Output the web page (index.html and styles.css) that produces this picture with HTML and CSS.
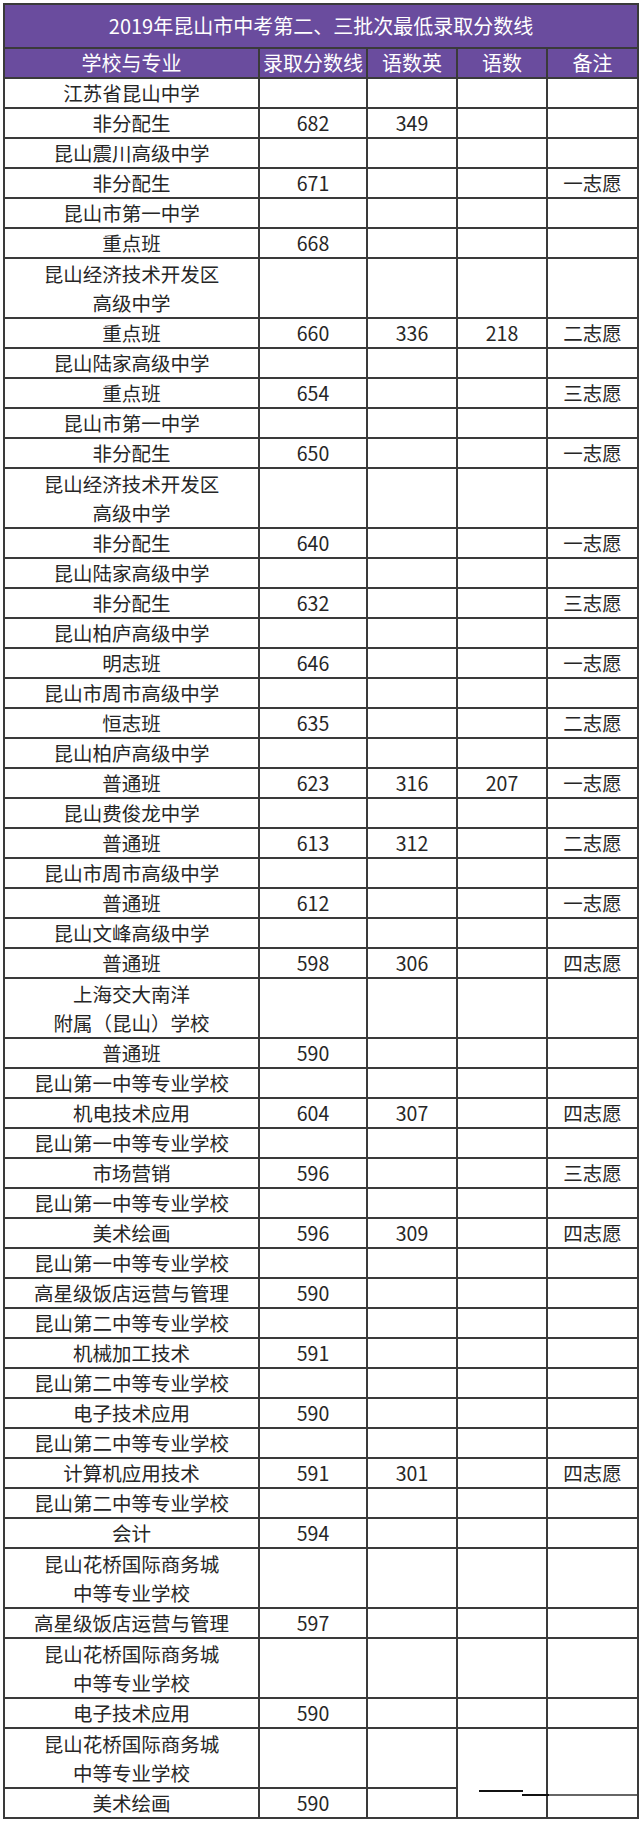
FILE: index.html
```html
<!DOCTYPE html>
<html lang="zh">
<head>
<meta charset="utf-8">
<title>2019年昆山市中考第二、三批次最低录取分数线</title>
<link rel="stylesheet" href="styles.css">
</head>
<body>
<div class="sheet">
<table class="scores">
<colgroup>
<col class="c-school"><col class="c-score"><col class="c-three"><col class="c-two"><col class="c-note">
</colgroup>
<thead>
<tr class="title-row"><th colspan="5">2019年昆山市中考第二、三批次最低录取分数线</th></tr>
<tr class="head-row"><th>学校与专业</th><th>录取分数线</th><th>语数英</th><th>语数</th><th>备注</th></tr>
</thead>
<tbody>
<tr><td>江苏省昆山中学</td><td></td><td></td><td></td><td></td></tr>
<tr><td>非分配生</td><td>682</td><td>349</td><td></td><td></td></tr>
<tr><td>昆山震川高级中学</td><td></td><td></td><td></td><td></td></tr>
<tr><td>非分配生</td><td>671</td><td></td><td></td><td>一志愿</td></tr>
<tr><td>昆山市第一中学</td><td></td><td></td><td></td><td></td></tr>
<tr><td>重点班</td><td>668</td><td></td><td></td><td></td></tr>
<tr class="dbl"><td>昆山经济技术开发区<br>高级中学</td><td></td><td></td><td></td><td></td></tr>
<tr><td>重点班</td><td>660</td><td>336</td><td>218</td><td>二志愿</td></tr>
<tr><td>昆山陆家高级中学</td><td></td><td></td><td></td><td></td></tr>
<tr><td>重点班</td><td>654</td><td></td><td></td><td>三志愿</td></tr>
<tr><td>昆山市第一中学</td><td></td><td></td><td></td><td></td></tr>
<tr><td>非分配生</td><td>650</td><td></td><td></td><td>一志愿</td></tr>
<tr class="dbl"><td>昆山经济技术开发区<br>高级中学</td><td></td><td></td><td></td><td></td></tr>
<tr><td>非分配生</td><td>640</td><td></td><td></td><td>一志愿</td></tr>
<tr><td>昆山陆家高级中学</td><td></td><td></td><td></td><td></td></tr>
<tr><td>非分配生</td><td>632</td><td></td><td></td><td>三志愿</td></tr>
<tr><td>昆山柏庐高级中学</td><td></td><td></td><td></td><td></td></tr>
<tr><td>明志班</td><td>646</td><td></td><td></td><td>一志愿</td></tr>
<tr><td>昆山市周市高级中学</td><td></td><td></td><td></td><td></td></tr>
<tr><td>恒志班</td><td>635</td><td></td><td></td><td>二志愿</td></tr>
<tr><td>昆山柏庐高级中学</td><td></td><td></td><td></td><td></td></tr>
<tr><td>普通班</td><td>623</td><td>316</td><td>207</td><td>一志愿</td></tr>
<tr><td>昆山费俊龙中学</td><td></td><td></td><td></td><td></td></tr>
<tr><td>普通班</td><td>613</td><td>312</td><td></td><td>二志愿</td></tr>
<tr><td>昆山市周市高级中学</td><td></td><td></td><td></td><td></td></tr>
<tr><td>普通班</td><td>612</td><td></td><td></td><td>一志愿</td></tr>
<tr><td>昆山文峰高级中学</td><td></td><td></td><td></td><td></td></tr>
<tr><td>普通班</td><td>598</td><td>306</td><td></td><td>四志愿</td></tr>
<tr class="dbl"><td>上海交大南洋<br>附属（昆山）学校</td><td></td><td></td><td></td><td></td></tr>
<tr><td>普通班</td><td>590</td><td></td><td></td><td></td></tr>
<tr><td>昆山第一中等专业学校</td><td></td><td></td><td></td><td></td></tr>
<tr><td>机电技术应用</td><td>604</td><td>307</td><td></td><td>四志愿</td></tr>
<tr><td>昆山第一中等专业学校</td><td></td><td></td><td></td><td></td></tr>
<tr><td>市场营销</td><td>596</td><td></td><td></td><td>三志愿</td></tr>
<tr><td>昆山第一中等专业学校</td><td></td><td></td><td></td><td></td></tr>
<tr><td>美术绘画</td><td>596</td><td>309</td><td></td><td>四志愿</td></tr>
<tr><td>昆山第一中等专业学校</td><td></td><td></td><td></td><td></td></tr>
<tr><td>高星级饭店运营与管理</td><td>590</td><td></td><td></td><td></td></tr>
<tr><td>昆山第二中等专业学校</td><td></td><td></td><td></td><td></td></tr>
<tr><td>机械加工技术</td><td>591</td><td></td><td></td><td></td></tr>
<tr><td>昆山第二中等专业学校</td><td></td><td></td><td></td><td></td></tr>
<tr><td>电子技术应用</td><td>590</td><td></td><td></td><td></td></tr>
<tr><td>昆山第二中等专业学校</td><td></td><td></td><td></td><td></td></tr>
<tr><td>计算机应用技术</td><td>591</td><td>301</td><td></td><td>四志愿</td></tr>
<tr><td>昆山第二中等专业学校</td><td></td><td></td><td></td><td></td></tr>
<tr><td>会计</td><td>594</td><td></td><td></td><td></td></tr>
<tr class="dbl"><td>昆山花桥国际商务城<br>中等专业学校</td><td></td><td></td><td></td><td></td></tr>
<tr><td>高星级饭店运营与管理</td><td>597</td><td></td><td></td><td></td></tr>
<tr class="dbl"><td>昆山花桥国际商务城<br>中等专业学校</td><td></td><td></td><td></td><td></td></tr>
<tr><td>电子技术应用</td><td>590</td><td></td><td></td><td></td></tr>
<tr class="dbl"><td>昆山花桥国际商务城<br>中等专业学校</td><td></td><td></td><td></td><td></td></tr>
<tr class="last"><td>美术绘画</td><td>590</td><td></td><td class="seam-a"></td><td class="seam-b"></td></tr>
</tbody>
</table>
</div>
</body>
</html>
```

FILE: styles.css
```css
html, body {
  margin: 0;
  padding: 0;
  background: #ffffff;
}

.sheet {
  padding: 3px 0 0 3px;
}

.scores {
  border-collapse: collapse;
  table-layout: fixed;
  width: 635px;
  font-family: "Noto Sans CJK SC", "Noto Sans", sans-serif;
  color: #262626;
}

.c-school { width: 255px; }
.c-score { width: 108px; }
.c-three { width: 90px; }
.c-two { width: 90px; }
.c-note { width: 91px; }

.scores th,
.scores td {
  border: 2px solid #3a3a3a;
  padding: 0;
  text-align: center;
  vertical-align: middle;
  white-space: nowrap;
  overflow: hidden;
}

.title-row th {
  background: #6a4c9e;
  color: #ffffff;
  font-size: 20px;
  font-weight: normal;
  line-height: 42px;
}

.head-row th {
  background: #6a4c9e;
  color: #ffffff;
  font-size: 20px;
  font-weight: normal;
  line-height: 28px;
}

.scores td {
  font-size: 19.5px;
  line-height: 28px;
}

.scores tr.dbl td {
  line-height: 29px;
}

/* the retouched seam at the bottom right of the sheet */
.scores td.seam-a,
.scores td.seam-b {
  overflow: visible;
  border-top-style: hidden;
}

.scores td.seam-a {
  position: relative;
}

.seam-a::before {
  content: "";
  position: absolute;
  left: 21px;
  top: 2px;
  width: 44px;
  height: 2px;
  background: #111111;
}

.seam-a::after {
  content: "";
  position: absolute;
  left: 64px;
  top: 6px;
  width: 115px;
  height: 2px;
  background: linear-gradient(to right, #111111 0, #111111 27px, #666666 27px, #666666 100%);
}
```
